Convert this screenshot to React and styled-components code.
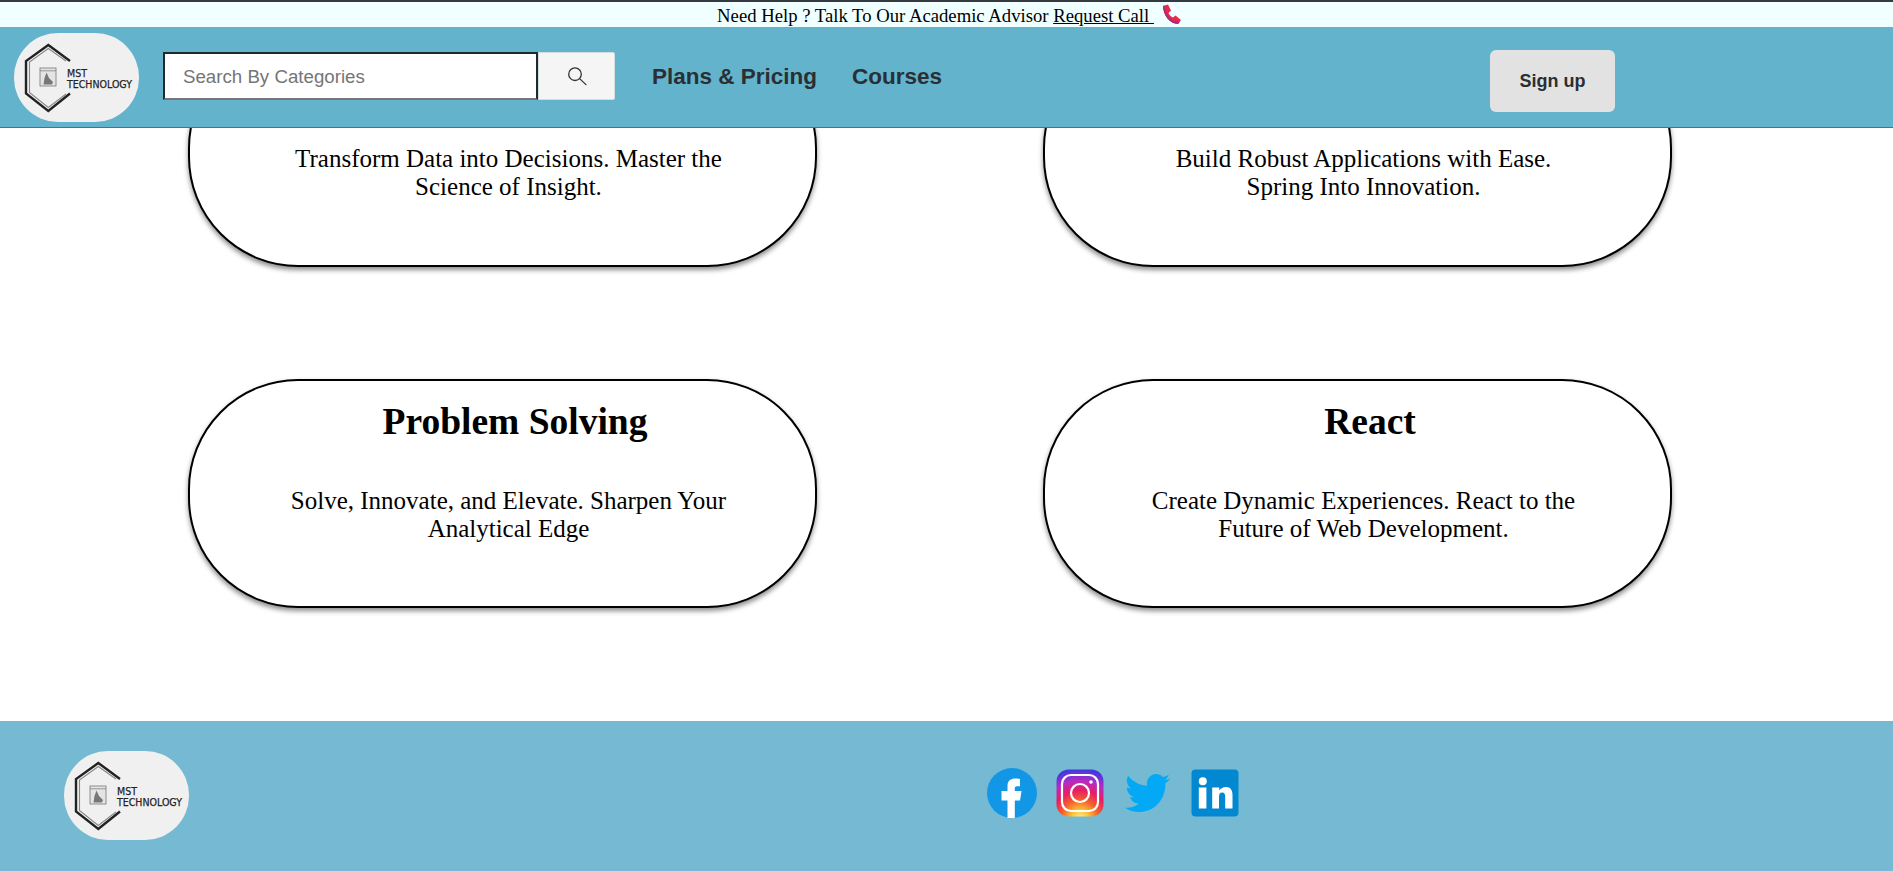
import React from "react";
import styled, { createGlobalStyle } from "styled-components";

const Global = createGlobalStyle`
  html, body { margin: 0; padding: 0; background: #fff; overflow: hidden; }
  body { font-family: "Liberation Serif", "Times New Roman", serif; }
  * { box-sizing: border-box; }
`;

const Page = styled.div`
  height: 871px;
  display: flex;
  flex-direction: column;
  overflow: hidden;
`;

const HelpBar = styled.div`
  height: 27px;
  flex: none;
  background: #f0ffff;
  border-top: 2px solid #343a40;
  font-size: 18.7px;
  line-height: 22px;
  color: #000;
  text-align: center;
  padding: 2px 0 0 8px;
  overflow: hidden;
`;

const CallLink = styled.a`
  color: #000;
  text-decoration: underline;
`;

const PhoneIcon = styled.svg`
  width: 30px;
  height: 21px;
  vertical-align: -3px;
`;

const NavBar = styled.header`
  height: 101px;
  flex: none;
  background: #64b3cc;
  border-bottom: 1px solid #5d6d75;
  display: flex;
  align-items: flex-start;
  padding: 6px 0 0 14px;
`;

const LogoBlob = styled.div`
  width: 125px;
  height: 89px;
  flex: none;
  background: #f0f0f0;
  border-radius: 44px / 44px;
  overflow: hidden;
`;

const LogoSvg = styled.svg`
  display: block;
  width: 125px;
  height: 89px;
`;

const SearchForm = styled.form`
  display: flex;
  margin: 19px 0 0 24px;
`;

const SearchInput = styled.input`
  width: 375px;
  height: 48px;
  border: 2px solid;
  border-color: #1d2b30 #1d2b30 #767676 #1d2b30;
  background: #fff;
  padding: 1px 18px 0;
  font: 18.7px "Liberation Sans", Arial, sans-serif;
  &::placeholder { color: #757575; opacity: 1; }
`;

const SearchButton = styled.button`
  width: 77px;
  height: 48px;
  background: #f5f5f5;
  border: 1px solid #d4dde0;
  border-radius: 0 2px 2px 0;
  display: flex;
  align-items: center;
  justify-content: center;
  padding: 0;
`;

const NavLinks = styled.nav`
  display: flex;
  gap: 35px;
  margin: 30px 0 0 37px;
`;

const NavLink = styled.a`
  font: bold 22.5px/28px "Liberation Sans", Arial, sans-serif;
  color: #2a2f33;
`;

const SignUp = styled.button`
  width: 125px;
  height: 62px;
  margin: 17px 0 0 548px;
  background: #e2e2e2;
  border: none;
  border-radius: 6px;
  font: bold 18px "Liberation Sans", Arial, sans-serif;
  color: #2a2f33;
`;

const Main = styled.main`
  flex: 1;
  min-height: 0;
  overflow: hidden;
  background: #fff;
`;

const CardGrid = styled.div`
  display: grid;
  grid-template-columns: 629px 629px;
  column-gap: 226px;
  row-gap: 112px;
  margin: -90px 0 0 188px;
`;

const Card = styled.article`
  height: 229px;
  border: 2px solid #000;
  border-radius: 110px;
  background: #fff;
  box-shadow: 0 3px 5px rgba(0, 0, 0, 0.45);
  padding-top: 18px;
  text-align: center;
`;

const CardTitle = styled.h2`
  margin: 0 0 0 ${(p) => p.$shift}px;
  min-height: 46px;
  font-size: 37.5px;
  line-height: 46px;
  font-weight: bold;
`;

const CardText = styled.p`
  margin: ${(p) => p.$gap}px auto 0;
  width: 470px;
  font-size: 25px;
  line-height: 28px;
  position: relative;
  left: 6px;
`;

const Footer = styled.footer`
  height: 150px;
  flex: none;
  background: #75bad2;
  display: flex;
  align-items: flex-start;
  padding: 30px 0 0 64px;
`;

const Socials = styled.div`
  display: flex;
  gap: 11.5px;
  margin: 14px 0 0 795px;
`;

const SocialIcon = styled.svg`
  display: block;
  width: 56px;
  height: 56px;
`;

const TwitterSlot = styled.a`
  width: 56px;
  height: 56px;
  display: flex;
  align-items: center;
  justify-content: center;
  color: #03a9f4;
`;

function Logo() {
  return (
    <LogoBlob>
      <LogoSvg viewBox="0 0 125 89">
        <g fill="none" strokeLinejoin="miter">
          <path d="M56 28 L34.3 12 L12 28 V60.5 L34.3 78 L56 60.5" stroke="#222" strokeWidth="2.4" />
          <path d="M52 28 L34.3 15.5 L15.5 29 V59.5 L34.3 74.5 L52 61" stroke="#888" strokeWidth="1.1" />
        </g>
        <rect x="26" y="35" width="16" height="18" fill="#e4e4e4" stroke="#777" strokeWidth="0.8" />
        <path d="M26 37.8 H42" stroke="#777" strokeWidth="0.7" />
        <path d="M32.5 39.5 L35 45 L39 49 L38 51.5 H29.5 L30.5 45 Z" fill="#777" />
        <text x="53" y="43.8" fontFamily="'DejaVu Sans', sans-serif" fontSize="10.5" fill="#222" stroke="#222" strokeWidth="0.25" textLength="20" lengthAdjust="spacingAndGlyphs">MST</text>
        <text x="53" y="54.6" fontFamily="'DejaVu Sans', sans-serif" fontSize="10.5" fill="#222" stroke="#222" strokeWidth="0.25" textLength="65" lengthAdjust="spacingAndGlyphs">TECHNOLOGY</text>
      </LogoSvg>
    </LogoBlob>
  );
}

function SearchGlyph() {
  return (
    <svg width="20" height="20" viewBox="0 0 20 20" fill="none" stroke="#333" strokeWidth="1.3" strokeLinecap="round">
      <circle cx="8" cy="8.2" r="6.3" />
      <path d="M12.6 12.6 L19 18.6" />
    </svg>
  );
}

function Facebook() {
  return (
    <SocialIcon viewBox="0 0 56 56">
      <circle cx="28" cy="28" r="25" fill="#1296e6" />
      <path d="M23.5 53 V35.5 H17.5 V26 H23.5 V21 C23.5 15.5 26.8 13.5 31.5 13.5 C33 13.5 35 13.7 36 14 V21.3 H33 C31 21.3 30.8 22.5 30.8 24 V26 H37.5 L36 35.5 H30.8 V53 Z" fill="#fff" />
    </SocialIcon>
  );
}

function Instagram() {
  return (
    <SocialIcon viewBox="0 0 56 56">
      <defs>
        <radialGradient id="igGrad" cx="50%" cy="105%" r="105%">
          <stop offset="0" stopColor="#fff1a8" />
          <stop offset="0.18" stopColor="#ffc233" />
          <stop offset="0.38" stopColor="#f6602c" />
          <stop offset="0.58" stopColor="#e61e63" />
          <stop offset="0.78" stopColor="#b52bc4" />
          <stop offset="1" stopColor="#4338e0" />
        </radialGradient>
      </defs>
      <rect x="4.5" y="4.5" width="47" height="47" rx="12" fill="url(#igGrad)" />
      <rect x="10" y="10" width="36" height="36" rx="9" fill="none" stroke="#fff" strokeWidth="2.2" />
      <circle cx="28" cy="28" r="9" fill="none" stroke="#fff" strokeWidth="2.2" />
      <circle cx="39" cy="17" r="1.8" fill="#fff" />
    </SocialIcon>
  );
}

function Twitter() {
  return (
    <TwitterSlot>
      <svg width="45" height="38" viewBox="0 0 512 416" fill="currentColor" preserveAspectRatio="none">
        <path d="M459.37 103.716c.325 4.548.325 9.097.325 13.645 0 138.72-105.583 298.558-298.558 298.558-59.452 0-114.68-17.219-161.137-47.106 8.447.974 16.568 1.299 25.34 1.299 49.055 0 94.213-16.568 130.274-44.832-46.132-.975-84.792-31.188-98.112-72.772 6.498.974 12.995 1.624 19.818 1.624 9.421 0 18.843-1.3 27.614-3.573-48.081-9.747-84.143-51.98-84.143-102.985v-1.299c13.969 7.797 30.214 12.67 47.431 13.319-28.264-18.843-46.781-51.005-46.781-87.391 0-19.492 5.197-37.36 14.294-52.954 51.655 63.675 129.3 105.258 216.365 109.807-1.624-7.797-2.599-15.918-2.599-24.04 0-57.828 46.782-104.934 104.934-104.934 30.213 0 57.502 12.67 76.67 33.137 23.715-4.548 46.456-13.32 66.599-25.34-7.798 24.366-24.366 44.833-46.132 57.827 21.117-2.273 41.584-8.122 60.426-16.243-14.292 20.791-32.161 39.308-52.628 54.253z" />
      </svg>
    </TwitterSlot>
  );
}

function LinkedIn() {
  return (
    <SocialIcon viewBox="0 0 56 56">
      <rect x="4.5" y="4.5" width="47" height="47" rx="4" fill="#0288d1" />
      <circle cx="15.8" cy="16.2" r="4" fill="#fff" />
      <rect x="11.8" y="22.5" width="7.6" height="21" fill="#fff" />
      <path d="M25.2 22.5 H32.2 V25.5 C33.7 23.2 36.2 21.9 38.7 21.9 C43.7 21.9 45.5 24.9 45.5 30.4 V43.5 H38.2 V32 C38.2 29.2 37.4 27.5 35.2 27.5 C32.7 27.5 32 29.3 32 32 V43.5 H25.2 Z" fill="#fff" />
    </SocialIcon>
  );
}

const cards = [
  { title: "", shift: 0, gap: 41, text: ["Transform Data into Decisions. Master the", "Science of Insight."] },
  { title: "", shift: 0, gap: 41, text: ["Build Robust Applications with Ease.", "Spring Into Innovation."] },
  { title: "Problem Solving", shift: 25, gap: 42, text: ["Solve, Innovate, and Elevate. Sharpen Your", "Analytical Edge"] },
  { title: "React", shift: 25, gap: 42, text: ["Create Dynamic Experiences. React to the", "Future of Web Development."] },
];

export default function App() {
  return (
    <Page>
      <Global />
      <HelpBar>
        Need Help ? Talk To Our Academic Advisor{" "}
        <CallLink href="#">
          Request Call&nbsp;
          <PhoneIcon viewBox="0 0 30 21">
            <path d="M9 2 L14 0.5 L17 6.5 L14.5 9 C15.5 11 17 12.5 19 13.5 L21.5 11.5 L27 16 L24 20 C16 20 9 11 9 2 Z" fill="#e8294c" />
            <path d="M9 2 L10.5 1.4 C11 9 15 15 21 17.2 L26 17.5 L24 20 C16 20 9 11 9 2 Z" fill="#a82a7c" />
          </PhoneIcon>
        </CallLink>
      </HelpBar>
      <NavBar>
        <Logo />
        <SearchForm>
          <SearchInput placeholder="Search By Categories" />
          <SearchButton type="button"><SearchGlyph /></SearchButton>
        </SearchForm>
        <NavLinks>
          <NavLink>Plans &amp; Pricing</NavLink>
          <NavLink>Courses</NavLink>
        </NavLinks>
        <SignUp type="button">Sign up</SignUp>
      </NavBar>
      <Main>
        <CardGrid>
          {cards.map((c, i) => (
            <Card key={i}>
              <CardTitle $shift={c.shift}>{c.title}</CardTitle>
              <CardText $gap={c.gap}>{c.text[0]}<br />{c.text[1]}</CardText>
            </Card>
          ))}
        </CardGrid>
      </Main>
      <Footer>
        <Logo />
        <Socials>
          <Facebook />
          <Instagram />
          <Twitter />
          <LinkedIn />
        </Socials>
      </Footer>
    </Page>
  );
}
